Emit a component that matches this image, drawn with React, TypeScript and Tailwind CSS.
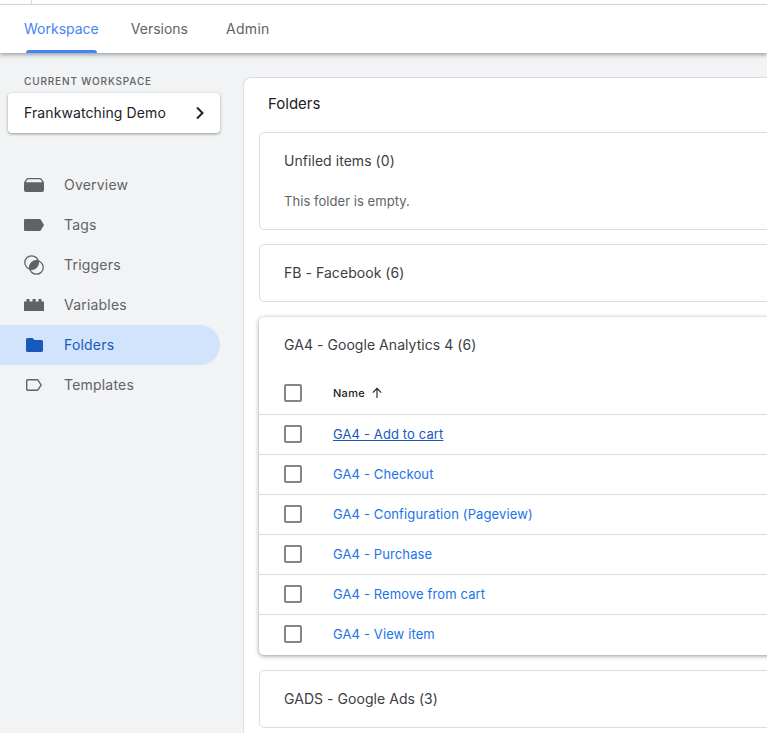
const font = { fontFamily: 'Inter, "Liberation Sans", sans-serif' };

const OverviewIcon = () => (
  <svg width="20" height="14" viewBox="0 0 20 14" fill="#5f6368">
    <path d="M4 0h12a2 2 0 0 1 1.7 1L20 4.5V12a2 2 0 0 1-2 2H2a2 2 0 0 1-2-2V4.5L2.3 1A2 2 0 0 1 4 0zm0 1.3a.8.8 0 0 0-.7.4L1.8 4.2h16.4l-1.5-2.5a.8.8 0 0 0-.7-.4H4z" fillRule="evenodd" />
  </svg>
);

const TagIcon = () => (
  <svg width="20" height="12" viewBox="0 0 20 12" fill="#5f6368">
    <path d="M1 0h14.5a1.5 1.5 0 0 1 1.2.6L20 6l-3.3 5.4a1.5 1.5 0 0 1-1.2.6H1a1 1 0 0 1-1-1V1a1 1 0 0 1 1-1z" />
  </svg>
);

const TriggerIcon = () => (
  <svg width="20" height="20" viewBox="0 0 20 20" fill="none" stroke="#5f6368" strokeWidth="1.3">
    <circle cx="7.6" cy="7.6" r="6.8" />
    <circle cx="12.4" cy="12.4" r="6.8" />
    <path fill="#5f6368" stroke="none" d="M14.17 5.83A6.8 6.8 0 0 0 5.83 14.17A6.8 6.8 0 0 0 14.17 5.83z" />
  </svg>
);

const VariableIcon = () => (
  <svg width="20" height="12" viewBox="0 0 20 12" fill="#5f6368">
    <path d="M0 2.5h2.5V0h3v2.5h3V0h3.2v2.5h2.8V0h3v2.5H20V12H0z" />
  </svg>
);

const FolderIcon = () => (
  <svg width="17" height="14" viewBox="0 0 17 14" fill="#185abc">
    <path d="M1.6 0h5l1.8 2h7A1.6 1.6 0 0 1 17 3.6v8.8a1.6 1.6 0 0 1-1.6 1.6H1.6A1.6 1.6 0 0 1 0 12.4V1.6A1.6 1.6 0 0 1 1.6 0z" />
  </svg>
);

const TemplateIcon = () => (
  <svg width="16" height="12" viewBox="0 0 16 12" fill="none" stroke="#5f6368" strokeWidth="1.4">
    <path d="M1.6.7h9.6a1 1 0 0 1 .8.4l3.1 4.9-3.1 4.9a1 1 0 0 1-.8.4H1.6a.9.9 0 0 1-.9-.9V1.6a.9.9 0 0 1 .9-.9z" />
  </svg>
);

const navItems = [
  { label: 'Overview', icon: <OverviewIcon /> },
  { label: 'Tags', icon: <TagIcon /> },
  { label: 'Triggers', icon: <TriggerIcon /> },
  { label: 'Variables', icon: <VariableIcon /> },
  { label: 'Folders', icon: <FolderIcon />, active: true },
  { label: 'Templates', icon: <TemplateIcon /> },
];

const tagRows = [
  'GA4 - Add to cart',
  'GA4 - Checkout',
  'GA4 - Configuration (Pageview)',
  'GA4 - Purchase',
  'GA4 - Remove from cart',
  'GA4 - View item',
];

const Checkbox = () => <span className="block size-[18px] rounded-[2px] border-2 border-[#80868b] bg-white" />;

const FolderCard = ({ title }: { title: string }) => (
  <div className="h-[58px] flex items-center px-6 rounded-[5px] border border-[#dadce0] bg-white text-sm tracking-[0.05px] text-[#3c4043]">
    {title}
  </div>
);

export default function App() {
  return (
    <div style={font} className="w-[767px] h-[733px] overflow-hidden flex flex-col bg-[#f1f3f4]">
      {/* Top bar remainder */}
      <div className="h-[5px] shrink-0 bg-white border-b border-[#dadce0] flex">
        <span className="ml-[31px] w-px h-full bg-[#dadce0]" />
      </div>

      {/* Tabs */}
      <div className="h-[48px] shrink-0 bg-white flex pl-6 gap-[32px] text-sm text-[#5f6368] shadow-[0_2px_4px_rgba(60,64,67,0.45)] relative z-10">
        <div className="relative flex items-center pb-[1px] text-[#4285f4]">
          Workspace
          <span className="absolute left-[2px] right-[2px] bottom-0 h-[3px] rounded-t-[3px] bg-[#4285f4]" />
        </div>
        <div className="flex items-center pb-[1px]">Versions</div>
        <div className="flex items-center pb-[1px] ml-[6px] tracking-[0.3px]">Admin</div>
      </div>

      <div className="flex flex-1 min-h-0">
        {/* Sidebar */}
        <aside className="w-[243px] shrink-0 pt-[22px]">
          <div className="pl-6 h-3 flex items-center text-[10px] font-medium tracking-[0.85px] text-[#5f6368]">
            CURRENT WORKSPACE
          </div>
          <button className="mt-[6px] ml-2 w-[212px] h-10 pl-4 pr-[15px] flex items-center justify-between rounded-[4px] bg-white text-sm tracking-[0.1px] text-[#202124] shadow-[0_1px_3px_rgba(60,64,67,0.5)]">
            Frankwatching Demo
            <svg width="10" height="14" viewBox="0 0 10 14" fill="none" stroke="#202124" strokeWidth="2">
              <path d="M2 1.5 7.5 7 2 12.5" />
            </svg>
          </button>
          <nav className="mt-8 w-[220px]">
            {navItems.map((item) => (
              <div
                key={item.label}
                className={`h-10 flex items-center rounded-r-[20px] text-sm tracking-[0.2px] ${item.active ? 'bg-[#d2e3fc] text-[#185abc]' : 'text-[#5f6368]'}`}
              >
                <span className="ml-6 w-5 mr-5 flex justify-center shrink-0">{item.icon}</span>
                {item.label}
              </div>
            ))}
          </nav>
        </aside>

        {/* Folders panel */}
        <main className="mt-6 w-[640px] shrink-0 rounded-tl-[8px] border-l border-t border-[#dadce0] bg-white pl-[15px]">
          <h1 className="h-[54px] flex items-center pl-[9px] pb-[2px] text-[15px] font-normal text-[#202124]">Folders</h1>

          <div className="flex flex-col gap-[14px]">
            <div className="h-[98px] rounded-[5px] border border-[#dadce0] px-6 pt-[20px] text-sm tracking-[0.05px] text-[#3c4043]">
              <div className="h-4 flex items-center">Unfiled items (0)</div>
              <div className="mt-6 h-4 flex items-center text-[13px] text-[#5f6368]">This folder is empty.</div>
            </div>

            <FolderCard title="FB - Facebook (6)" />

            <div className="mt-px rounded-[5px] bg-white shadow-[0_1px_4px_rgba(60,64,67,0.55)]">
              <div className="h-[56px] flex items-center px-[25px] text-sm tracking-[0.05px] text-[#3c4043]">
                GA4 - Google Analytics 4 (6)
              </div>
              <div className="h-[42px] flex items-center pl-[25px] pb-[1px] border-b border-[#dadce0]">
                <Checkbox />
                <span className="ml-[31px] text-[11px] tracking-[0.3px] font-medium text-[#202124]">Name</span>
                <svg className="ml-[6px]" width="12" height="12" viewBox="0 0 12 12" fill="none" stroke="#202124" strokeWidth="1.1">
                  <path d="M6 11V1.5M1.8 5.6 6 1.4l4.2 4.2" />
                </svg>
              </div>
              {tagRows.map((row, i) => (
                <div
                  key={row}
                  className={`h-10 flex items-center pl-[25px] pb-px border-b ${i < tagRows.length - 1 ? 'border-[#dadce0]' : 'border-transparent'}`}
                >
                  <Checkbox />
                  <a className={`ml-[31px] mt-[2px] text-[13px] tracking-[0.12px] ${i === 0 ? 'text-[#185abc] underline' : 'text-[#1a73e8]'}`}>
                    {row}
                  </a>
                </div>
              ))}
            </div>

            <div className="mt-px">
              <FolderCard title="GADS - Google Ads (3)" />
            </div>
          </div>
        </main>
      </div>
    </div>
  );
}
